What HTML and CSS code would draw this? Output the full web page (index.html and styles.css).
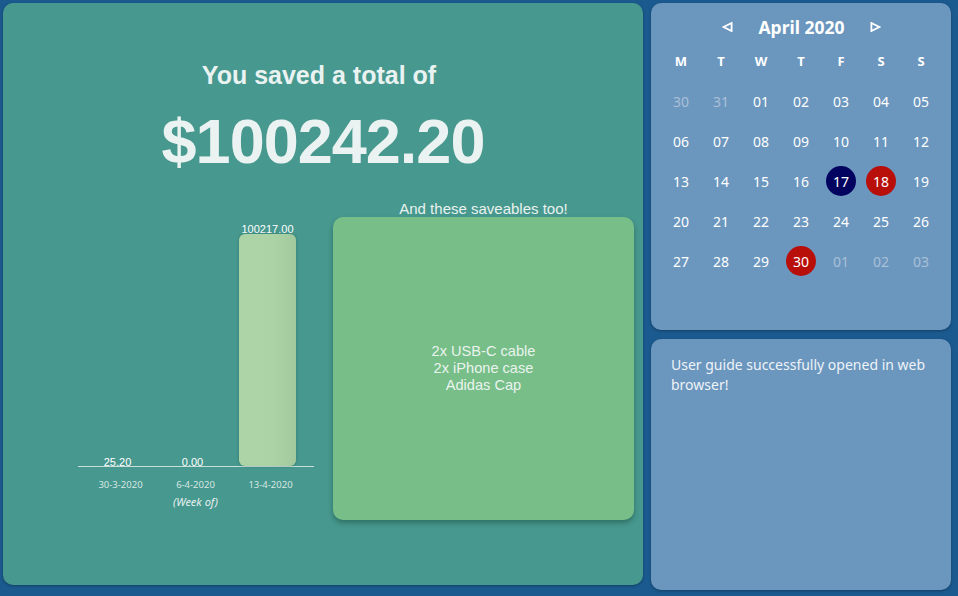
FILE: index.html
```html
<!DOCTYPE html>
<html>
<head>
<meta charset="utf-8">
<link rel="stylesheet" href="styles.css">
</head>
<body>
<div class="app">
  <section class="savings">
    <h1 class="title">You saved a total of</h1>
    <h2 class="total">$100242.20</h2>
    <div class="content">
      <div class="chart">
        <div class="plot">
          <div class="col"><span class="val">25.20</span><div class="bar" style="height:0px"></div></div>
          <div class="col"><span class="val">0.00</span><div class="bar" style="height:0px"></div></div>
          <div class="col"><span class="val">100217.00</span><div class="bar" style="height:232px"></div></div>
        </div>
        <div class="dates">
          <span>30-3-2020</span>
          <span>6-4-2020</span>
          <span>13-4-2020</span>
          <span class="weekof">(Week of)</span>
        </div>
      </div>
      <div class="saveables">
        <div class="sv-title">And these saveables too!</div>
        <div class="sv-box">
          <div>2x USB-C cable</div>
          <div>2x iPhone case</div>
          <div>Adidas Cap</div>
        </div>
      </div>
    </div>
  </section>
  <aside class="side">
    <section class="calendar">
      <div class="cal-head">
        <svg class="arrow" width="11" height="10" viewBox="0 0 11 10"><polygon points="1.6,5 9.6,1 9.6,9" fill="none" stroke="#fff" stroke-width="1.8" stroke-linejoin="miter"/></svg>
        <span class="month">April 2020</span>
        <svg class="arrow" width="11" height="10" viewBox="0 0 11 10"><polygon points="9.4,5 1.4,1 1.4,9" fill="none" stroke="#fff" stroke-width="1.8" stroke-linejoin="miter"/></svg>
      </div>
      <div class="grid">
        <span class="wd">M</span><span class="wd">T</span><span class="wd">W</span><span class="wd">T</span><span class="wd">F</span><span class="wd">S</span><span class="wd">S</span>
        <span class="d other">30</span><span class="d other">31</span><span class="d">01</span><span class="d">02</span><span class="d">03</span><span class="d">04</span><span class="d">05</span>
        <span class="d">06</span><span class="d">07</span><span class="d">08</span><span class="d">09</span><span class="d">10</span><span class="d">11</span><span class="d">12</span>
        <span class="d">13</span><span class="d">14</span><span class="d">15</span><span class="d">16</span><span class="d"><i class="dot today">17</i></span><span class="d"><i class="dot mark">18</i></span><span class="d">19</span>
        <span class="d">20</span><span class="d">21</span><span class="d">22</span><span class="d">23</span><span class="d">24</span><span class="d">25</span><span class="d">26</span>
        <span class="d">27</span><span class="d">28</span><span class="d">29</span><span class="d"><i class="dot mark">30</i></span><span class="d other">01</span><span class="d other">02</span><span class="d other">03</span>
      </div>
    </section>
    <section class="message">
      <p>User guide successfully opened in web browser!</p>
    </section>
  </aside>
</div>
</body>
</html>
```

FILE: styles.css
```css
* { box-sizing: border-box; }
html, body { margin: 0; padding: 0; }
body {
  background: #1b5a8f;
  width: 958px;
  height: 596px;
  overflow: hidden;
}
.app {
  display: flex;
  gap: 8px;
  padding: 3px;
}
.savings {
  width: 640px;
  height: 582px;
  background: #47988e;
  border-radius: 10px;
  box-shadow: 0 1px 3px rgba(0,0,0,0.3);
  font-family: "Liberation Sans", Arial, sans-serif;
  color: #eaf3f1;
  padding-top: 57px;
  display: flex;
  flex-direction: column;
  align-items: stretch;
}
.title {
  margin: 0;
  font-size: 25px;
  line-height: 30px;
  font-weight: bold;
  text-align: center;
  padding-right: 8px;
}
.total {
  margin: 15px 0 0;
  font-size: 63px;
  line-height: 72px;
  letter-spacing: -1px;
  font-weight: bold;
  text-align: center;
}
.content {
  display: flex;
  margin-top: 23px;
  padding-left: 75px;
  gap: 19px;
}
.chart {
  width: 236px;
  display: flex;
  flex-direction: column;
}
.plot {
  height: 267px;
  border-bottom: 1px solid #c9ddd9;
  display: grid;
  grid-template-columns: repeat(3, 75px);
  padding-left: 2px;
  align-items: end;
}
.col {
  display: flex;
  flex-direction: column;
  align-items: center;
  justify-content: flex-end;
}
.val {
  font-size: 11px;
  line-height: 12px;
  color: #ffffff;
  margin-bottom: -1px;
}
.bar {
  width: 57px;
  border-radius: 6px;
  background: linear-gradient(90deg, #acd4a7 0%, #acd3a6 60%, #a2c99d 100%);
  box-shadow: 0 0 3px rgba(0,60,50,0.35);
}
.col:nth-child(1) .val, .col:nth-child(2) .val { margin-bottom: -2px; }
.dates {
  display: grid;
  grid-template-columns: repeat(3, 75px);
  padding-left: 5px;
  margin-top: 11px;
  font-family: "Noto Sans", "Open Sans", sans-serif;
  font-size: 9.5px;
  line-height: 14px;
  color: #d6e7e3;
  text-align: center;
}
.weekof {
  grid-column: 2;
  font-style: italic;
  font-size: 11px;
  margin-top: 3px;
  color: #e6f0ee;
}
.saveables {
  width: 301px;
  display: flex;
  flex-direction: column;
}
.sv-title {
  font-size: 15px;
  line-height: 17px;
  text-align: center;
  color: #e9f2ef;
}
.sv-box {
  height: 303px;
  background: #77be88;
  border-radius: 10px;
  box-shadow: 0 3px 5px rgba(0,40,30,0.35);
  display: flex;
  flex-direction: column;
  justify-content: center;
  align-items: center;
  font-size: 14.6px;
  line-height: 17px;
  color: #eaf4ee;
}
.side {
  width: 300px;
  display: flex;
  flex-direction: column;
  gap: 9px;
  font-family: "Noto Sans", "Open Sans", sans-serif;
  color: #ffffff;
}
.calendar {
  height: 327px;
  background: #6b96be;
  border-radius: 10px;
  box-shadow: 0 1px 3px rgba(0,0,0,0.3);
  padding: 10px 9px 0 10px;
}
.cal-head {
  height: 28px;
  display: flex;
  align-items: center;
  justify-content: center;
  gap: 25px;
}
.arrow { display: block; }
.month {
  font-size: 17.5px;
  font-weight: bold;
  line-height: 28px;
}
.grid {
  display: grid;
  grid-template-columns: repeat(7, 40px);
  grid-auto-rows: 40px;
}
.wd {
  display: flex;
  align-items: center;
  justify-content: center;
  font-weight: bold;
  font-size: 13px;
}
.d {
  display: flex;
  align-items: center;
  justify-content: center;
  font-size: 14px;
}
.d.other { color: #aac0d8; }
.dot {
  font-style: normal;
  width: 30px;
  height: 30px;
  border-radius: 50%;
  display: flex;
  align-items: center;
  justify-content: center;
}
.dot.today { background: #030460; }
.dot.mark { background: #b80f0b; }
.message {
  height: 251px;
  background: #6b96be;
  border-radius: 10px;
  box-shadow: 0 1px 3px rgba(0,0,0,0.3);
  padding: 16px 20px 0 20px;
}
.message p {
  margin: 0;
  font-size: 14px;
  line-height: 20px;
  color: #eef3f8;
}
```
